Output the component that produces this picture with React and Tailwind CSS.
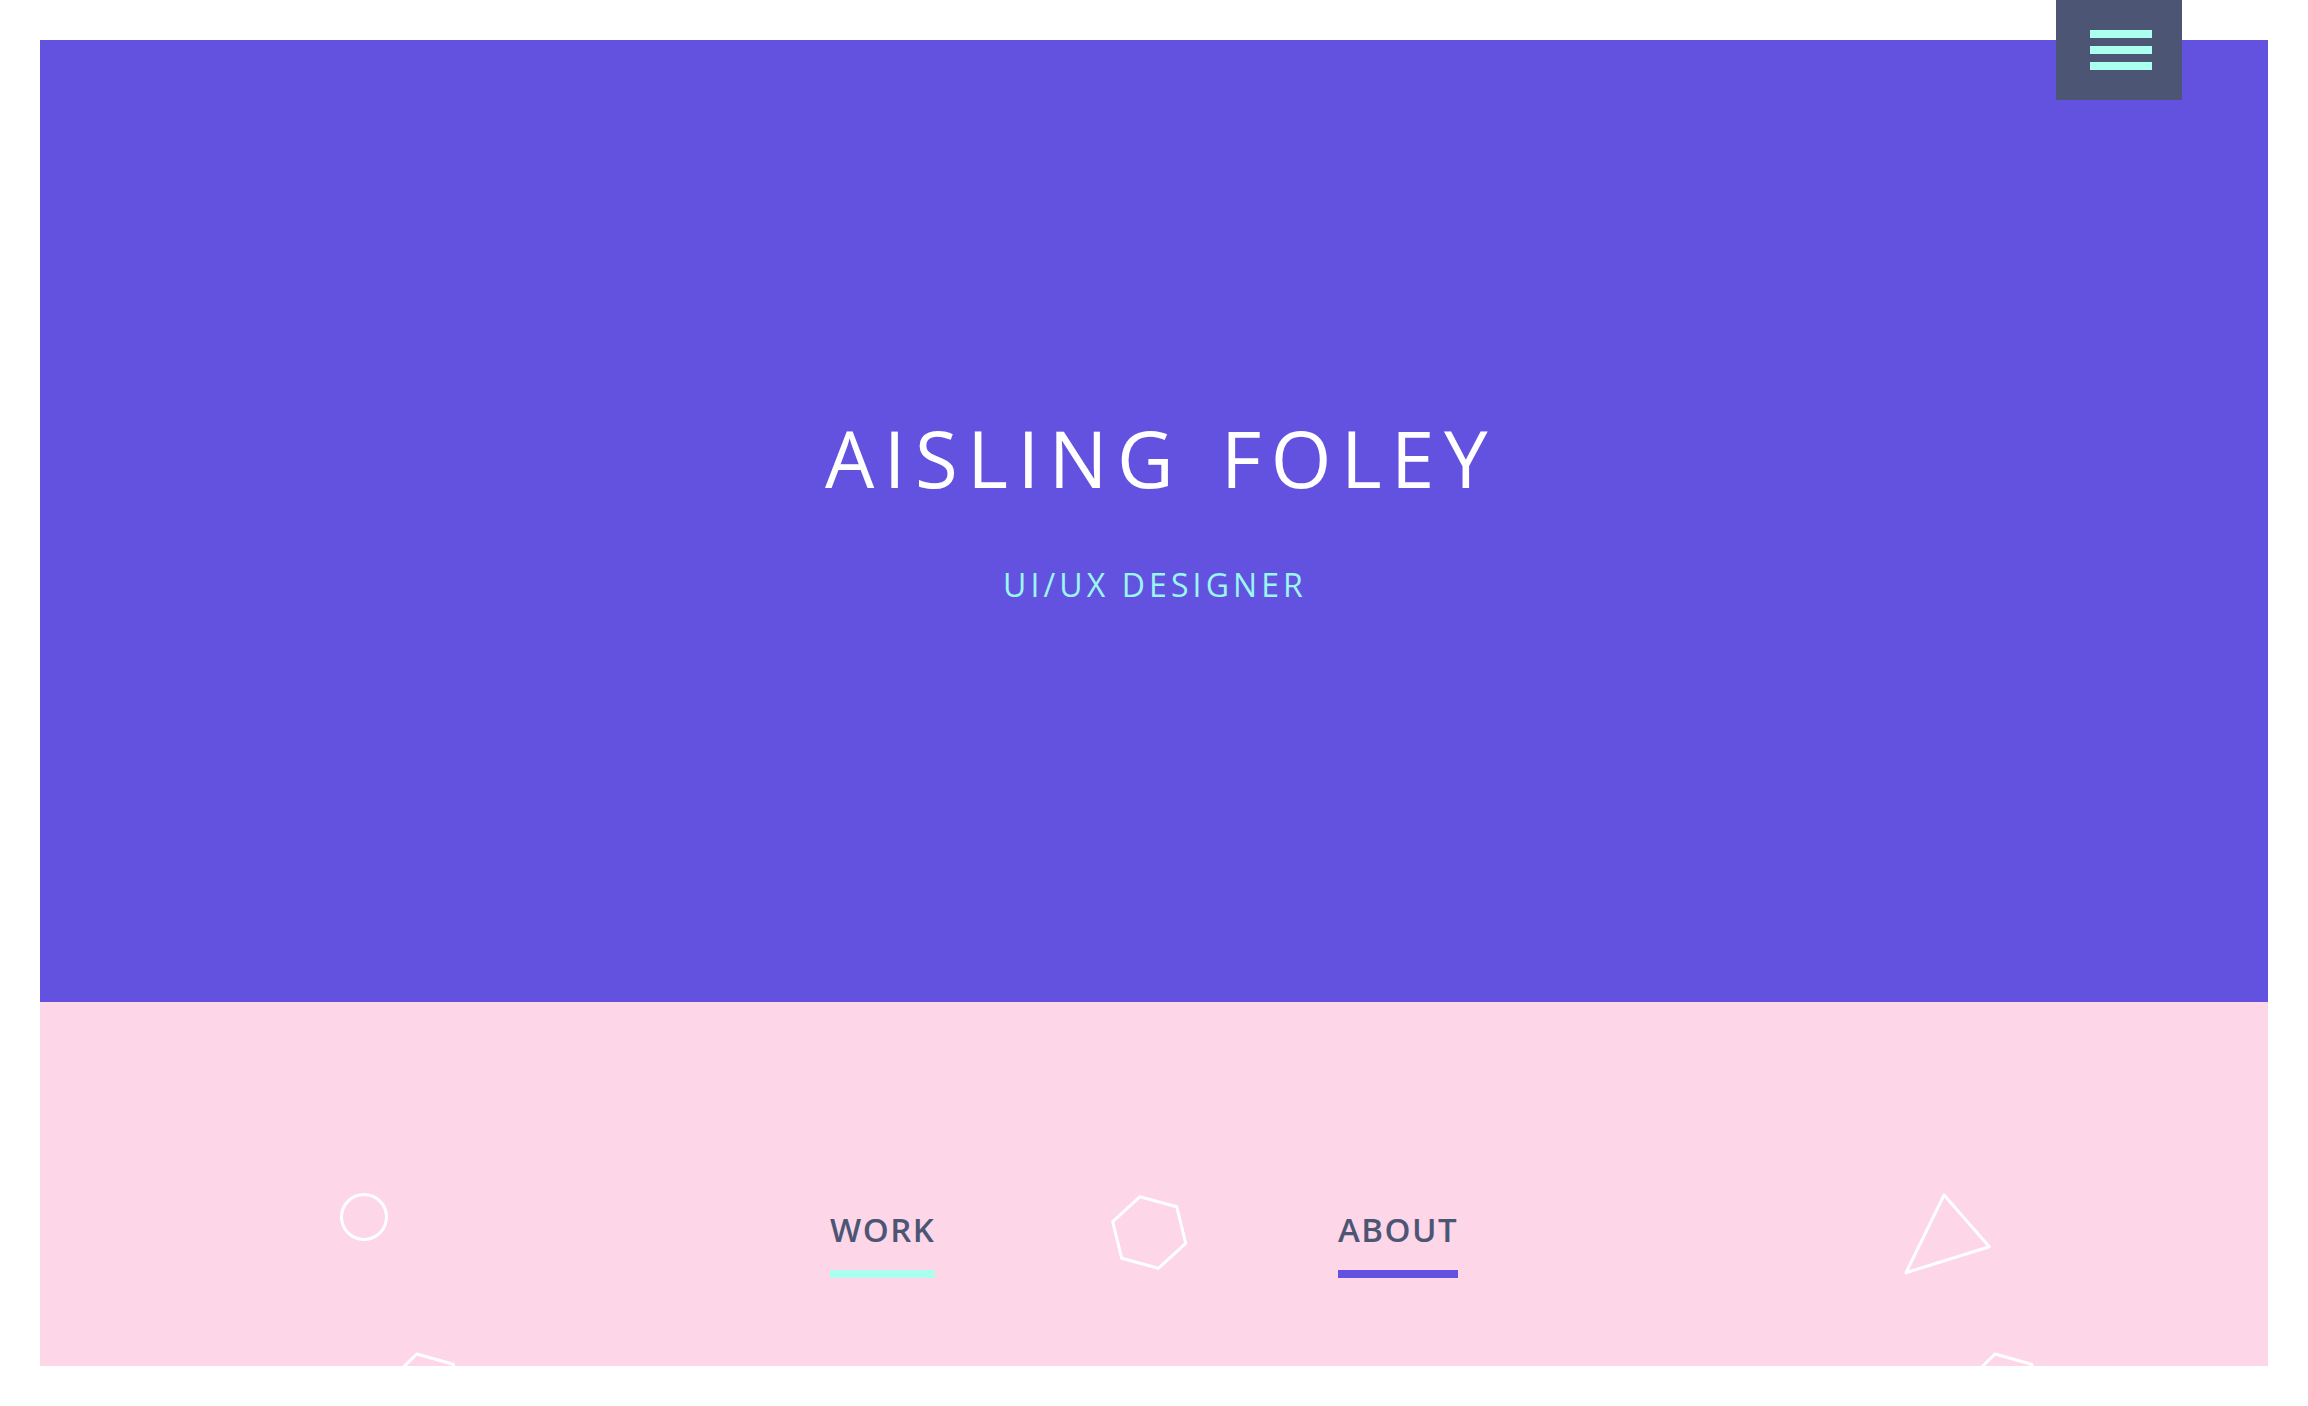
import React from 'react';

const hexA = '376.7,352 413.3,362.2 422.8,399 395.7,425.6 359.1,415.4 349.6,378.6';
const hexB = '1955,352 1991.6,362.2 2001.1,399 1974,425.6 1937.4,415.4 1927.9,378.6';

// floating outline shapes behind the nav
const Shapes = () => (
  <svg
    className="absolute inset-0 pointer-events-none"
    width="2228"
    height="364"
    viewBox="0 0 2228 364"
    fill="none"
    stroke="#ffffff"
    strokeWidth="3"
    strokeLinejoin="round"
  >
    <circle cx="324" cy="215" r="22.5" />
    <polygon points="1100,194.7 1136.7,204.7 1145.7,241.3 1118.3,266.3 1081.7,256.3 1072.7,219.7" />
    <polygon points="1904,193 1949.3,244.7 1866,270.7" />
    <polygon points={hexA} />
    <polygon points={hexB} />
  </svg>
);

const NavItem = ({ label, bar }) => (
  <a href="#" className="inline-flex flex-col">
    <span className="text-[33px] leading-none font-semibold tracking-[1.5px] text-[#4d5575]">
      {label}
    </span>
    <span className={`mt-[24px] h-[8px] w-full ${bar}`}></span>
  </a>
);

const App = () => {
  return (
    <div
      className="relative bg-white p-[40px] min-h-screen"
      style={{ fontFamily: '"Open Sans", "Noto Sans", sans-serif' }}
    >
      {/* menu button */}
      <button className="absolute top-0 right-[126px] w-[126px] h-[100px] bg-[#4d5575] flex flex-col gap-[8px] pl-[34px] pt-[30px] z-10">
        <span className="block w-[62px] h-[8px] bg-[#aaffee]"></span>
        <span className="block w-[62px] h-[8px] bg-[#aaffee]"></span>
        <span className="block w-[62px] h-[8px] bg-[#aaffee]"></span>
      </button>

      {/* hero */}
      <header className="h-[962px] bg-[#6352e0] pt-[379px] text-center">
        <h1 className="text-[78px] leading-none font-normal tracking-[9.5px] text-white [word-spacing:8px] pl-[14px]">
          AISLING FOLEY
        </h1>
        <p className="mt-[72px] text-[32px] leading-none tracking-[4.1px] text-[#9af7f0] pl-[2px]">
          UI/UX DESIGNER
        </p>
      </header>

      {/* nav */}
      <section className="relative h-[364px] bg-[#fdd6e8] overflow-hidden">
        <Shapes />
        <nav className="relative grid grid-cols-[508px_auto] justify-start pl-[790px] pt-[211px]">
          <div>
            <NavItem label="WORK" bar="bg-[#aaffee]" />
          </div>
          <div>
            <NavItem label="ABOUT" bar="bg-[#6352e0]" />
          </div>
        </nav>
      </section>
    </div>
  );
};

export default App;
